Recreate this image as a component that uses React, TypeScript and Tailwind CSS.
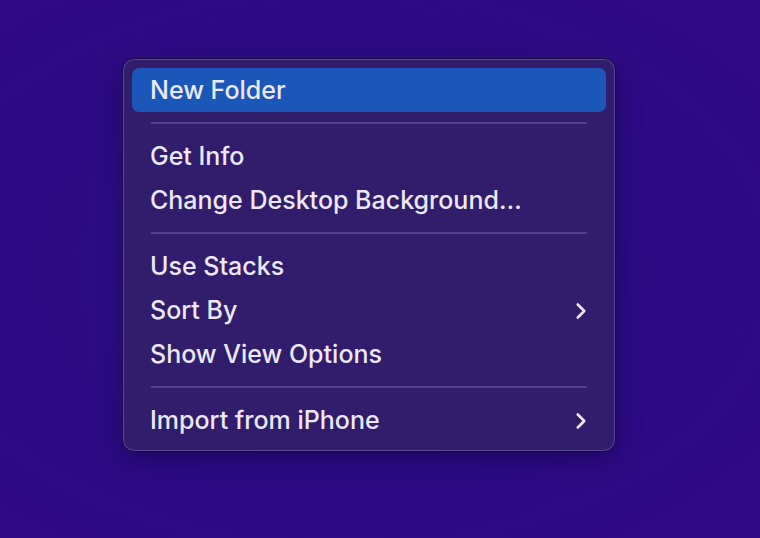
import { ChevronRight } from "lucide-react";

type Row = { label: string; sub?: boolean; active?: boolean } | "sep";

const rows: Row[] = [
  { label: "New Folder", active: true },
  "sep",
  { label: "Get Info" },
  { label: "Change Desktop Background…" },
  "sep",
  { label: "Use Stacks" },
  { label: "Sort By", sub: true },
  { label: "Show View Options" },
  "sep",
  { label: "Import from iPhone", sub: true },
];

export default function App() {
  return (
    <div
      className="w-[760px] h-[538px] overflow-hidden bg-[radial-gradient(ellipse_at_45%_50%,#2f0f82_0%,#2c0b84_55%,#330a86_100%)] pt-[58px] pl-[122px]"
      style={{ fontFamily: "Inter, 'Noto Sans', sans-serif" }}
    >
      <div className="w-[494px] rounded-[12px] border border-[#1a0848] bg-[#321c6c] shadow-[inset_0_0_0_1px_#5a4892,0_8px_24px_rgba(10,0,40,0.35)] px-[9px] pt-[9px] pb-[9px]">
        {rows.map((r, i) =>
          r === "sep" ? (
            <div key={i} className="h-[22px] flex items-center px-[19px]">
              <div className="h-[2px] w-full bg-[#54428e]" />
            </div>
          ) : (
            <div
              key={i}
              className={`h-[44px] flex items-center justify-between pl-[18px] pr-[12px] pt-[1px] rounded-[7px] text-[25px] font-medium text-[#ece8f6] ${
                r.active ? "bg-[#1b57b9]" : ""
              }`}
            >
              <span>{r.label}</span>
              {r.sub && <ChevronRight className="w-[26px] h-[26px] text-[#ece8f6]" strokeWidth={2.4} />}
            </div>
          )
        )}
      </div>
    </div>
  );
}
